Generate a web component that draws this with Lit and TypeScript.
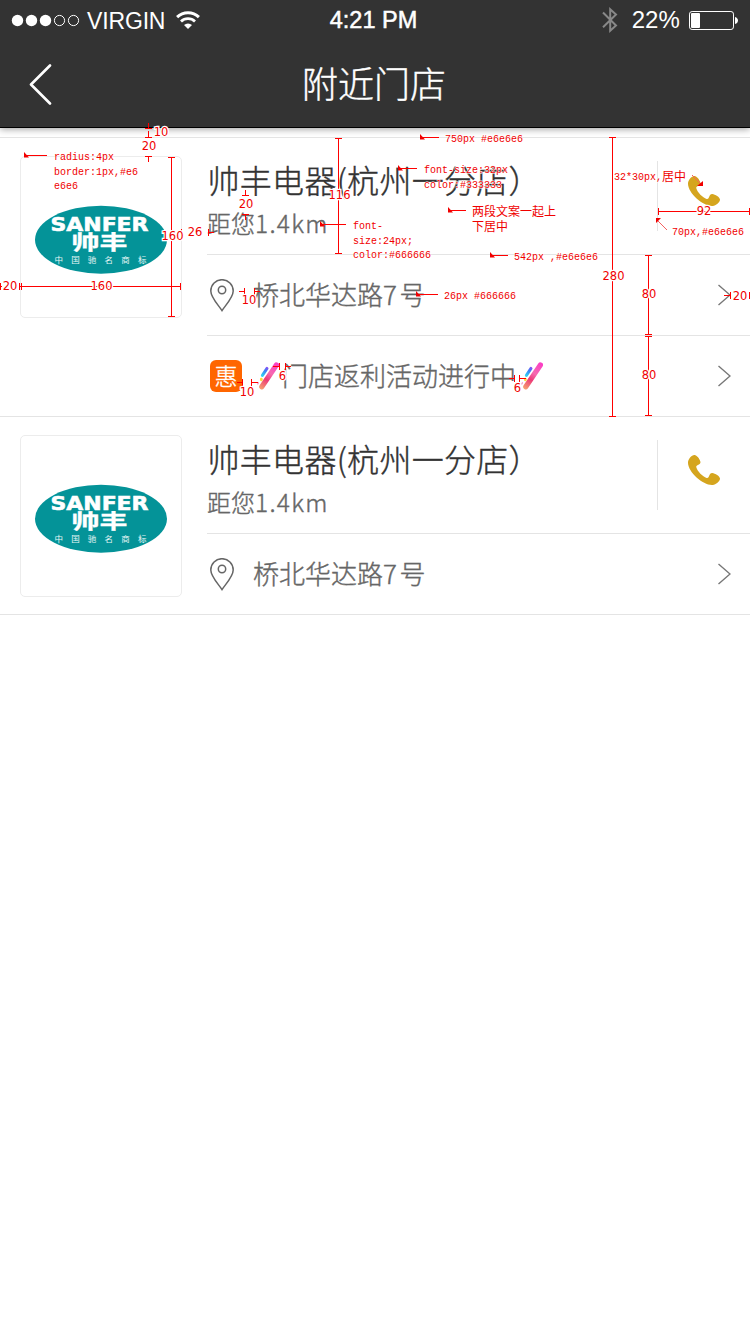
import { LitElement, html, svg, css } from "lit";
import { customElement, property } from "lit/decorators.js";

interface Store {
  name: string;
  distance: [string, string];
  address: [string, string, string];
  promo?: string;
}

const STORES: Store[] = [
  { name: "帅丰电器(杭州一分店）", distance: ["距您", "1.4km"], address: ["桥北华达路", "7", "号"], promo: "门店返利活动进行中" },
  { name: "帅丰电器(杭州一分店）", distance: ["距您", "1.4km"], address: ["桥北华达路", "7", "号"] },
];

@customElement("status-bar")
class StatusBar extends LitElement {
  static styles = css`
    :host { display: grid; grid-template-columns: 1fr auto 1fr; height: 40px; align-items: center; color: #fff; font: 23px/40px "Liberation Sans", Arial, sans-serif; -webkit-text-stroke: 0; }
    svg { display: block; flex: none; }
    .left, .right { display: flex; align-items: center; height: 40px; }
    .left { padding-left: 11px; }
    .right { justify-content: flex-end; padding-right: 12px; }
    .carrier { margin-left: 7px; width: 89px; padding-top: 1px; letter-spacing: -0.15px; }
    .time { font-size: 23.5px; -webkit-text-stroke: 0.5px #fff; padding-right: 3px; }
    .percent { margin: 0 9px 0 14px; font-size: 24px; letter-spacing: 0.1px; }
  `;
  render() {
    return html`
      <div class="left">
        <svg width="69" height="14" viewBox="0 0 69 14">
          ${[6.5, 20.5, 34.5].map((x) => svg`<circle cx=${x} cy="7.5" r="5.7" fill="#fff" />`)}
          ${[48.5, 62.5].map((x) => svg`<circle cx=${x} cy="7.5" r="5.1" fill="none" stroke="#fff" />`)}
        </svg>
        <span class="carrier">VIRGIN</span>
        <svg width="24" height="20" viewBox="0 0 24 20" fill="none" stroke="#fff" stroke-width="3">
          <path d="M1.1 7.1a15.6 15.6 0 0 1 21.8 0" />
          <path d="M5 11.4a10.2 10.2 0 0 1 14 0" stroke-width="2.8" />
          <path d="M8 15a6 6 0 0 1 8 0l-4 4z" fill="#fff" stroke="none" />
        </svg>
      </div>
      <span class="time">4:21 PM</span>
      <div class="right">
        <svg width="16" height="28" viewBox="0 0 16 28" fill="none" stroke="#888" stroke-width="2">
          <path d="M1 6.500l13 13-5.800 5.300V3.200L14 8.500 1 21.300" />
        </svg>
        <span class="percent">22%</span>
        <svg width="49" height="20" viewBox="0 0 49 20">
          <rect x=".5" y="1.5" width="44" height="18" rx="2.6" fill="none" stroke="#fff" />
          <rect x="2" y="3" width="9" height="15" rx="1" fill="#fff" />
          <path d="M46 7c4 1 4 6 0 7z" fill="#fff" />
        </svg>
      </div>
    `;
  }
}

@customElement("store-logo")
class StoreLogo extends LitElement {
  static styles = css`
    :host { display: block; box-sizing: border-box; width: 162px; height: 162px; border: 1px solid #ececec; border-radius: 5px; overflow: hidden; -webkit-text-stroke: 0; }
    svg { display: block; }
    .latin { font: bold 19.5px "DejaVu Sans", sans-serif; fill: #fff; stroke: #fff; stroke-width: 0.6px; }
    .brand { font: 700 20.5px "Noto Sans CJK SC", sans-serif; fill: #fff; stroke: #fff; stroke-width: 0.3px; }
    .tag { font: 8.5px "Noto Sans CJK SC", sans-serif; fill: #e4f6f5; text-anchor: middle; }
  `;
  render() {
    return html`<svg width="160" height="160" viewBox="0 0 160 160">
      <ellipse cx="80" cy="82.700" rx="66" ry="34" fill="#049398" />
      <text class="latin" x="29.500" y="74" textLength="98" lengthAdjust="spacingAndGlyphs">SANFER</text>
      <text class="brand" x="50.500" y="93" textLength="56" lengthAdjust="spacingAndGlyphs">帅丰</text>
      ${[..."中国驰名商标"].map((c, i) => svg`<text class="tag" x=${37.7 + i * 16.7} y="106">${c}</text>`)}
    </svg>`;
  }
}

@customElement("store-card")
class StoreCard extends LitElement {
  @property({ attribute: false }) store!: Store;

  static styles = css`
    :host { display: flex; border-bottom: 1px solid #e4e4e4; padding-left: 20px; gap: 25px; }
    svg { display: block; flex: none; }
    .logo { flex: none; margin-top: 18px; }
    .info { flex: 1; }
    .head { display: flex; align-items: center; height: 116px; }
    .names { flex: 1; height: 116px; white-space: nowrap; padding-top: 18px; box-sizing: border-box; }
    .name { font-size: 32px; line-height: 46px; color: #333; letter-spacing: 0.3px; padding-left: 0.5px; }
    .distance { font-size: 24px; line-height: 42px; color: #666; }
    .latin { font-size: 24.5px; letter-spacing: 1.3px; }
    .call { width: 92px; border-left: 1px solid #e4e4e4; display: flex; justify-content: center; padding-top: 15px; height: 55px; }
    .row { display: flex; align-items: center; height: 80px; border-top: 1px solid #e4e4e4; padding: 0 19px 0 3px; font-size: 26px; line-height: 36px; color: #666; white-space: nowrap; }
    .address { flex: 1; margin-left: 19px; padding-bottom: 2px; }
    .seven { letter-spacing: 2.5px; }
    .badge { width: 32px; height: 32px; border-radius: 6px; background: #ff6600; color: #fff; font-size: 23px; line-height: 31px; text-align: center; margin-right: 15px; }
    .promo { margin: 0 5px 0 3px; padding-bottom: 2px; }
    .push { flex: 1; }
  `;

  private chevron() {
    return html`<svg width="13" height="22" viewBox="0 0 13 22" fill="none" stroke="#777" stroke-width="1.4">
      <path d="M.5 1L12 11 .5 21" />
    </svg>`;
  }

  private brush() {
    return html`<svg width="22" height="28" viewBox="0 0 22 28" stroke-linecap="round">
      <defs>
        <linearGradient id="handle" gradientUnits="userSpaceOnUse" x1="4" y1="26" x2="20" y2="2">
          <stop offset="0" stop-color="#f59a70" />
          <stop offset=".35" stop-color="#ed3a78" />
          <stop offset=".6" stop-color="#f56bb0" />
          <stop offset="1" stop-color="#fb3fc4" />
        </linearGradient>
        <linearGradient id="spark" gradientUnits="userSpaceOnUse" x1="5" y1="14" x2="11" y2="5">
          <stop offset="0" stop-color="#2fd5f2" />
          <stop offset=".6" stop-color="#3d7cf5" />
          <stop offset="1" stop-color="#9747f5" />
        </linearGradient>
      </defs>
      <path d="M19.400 3L4.800 24.800" stroke="url(#handle)" stroke-width="5.200" />
      <path d="M10 6.400L5.400 13.400" stroke="url(#spark)" stroke-width="3" />
      <path d="M4.300 17.200l.1.6" stroke="#ffd93d" stroke-width="2.800" />
      <path d="M1.400 20.800l-.6 1.200" stroke="#f38ac0" stroke-width="1.200" />
    </svg>`;
  }

  render() {
    const s = this.store;
    return html`
      <store-logo class="logo"></store-logo>
      <div class="info">
        <div class="head">
          <div class="names">
            <div class="name">${s.name}</div>
            <div class="distance">${s.distance[0]}<span class="latin">${s.distance[1]}</span></div>
          </div>
          <div class="call">
            <svg width="32" height="30" viewBox="0 0 32 30" fill="#d5a51e">
              <path d="M0 7.400C.1 4.200 3.400.2 6.400 0c2.200-.1 5.300 3.800 6 6.700.3 1.400-.5 2.300-2 3C8.700 10.500 8 11 8.300 12.200c1 4.200 6.500 9.300 10.300 10.700 1.200.4 1.900-.2 2.500-1.800.7-1.900 1.600-3.200 3.100-3.100 3 .2 7.700 3.300 7.800 5.500.1 2.500-4.100 6-7.200 6.400C15.500 30.800-.3 17 0 7.400z" />
            </svg>
          </div>
        </div>
        <div class="row">
          <svg width="24" height="33" viewBox="0 0 24 33" fill="none" stroke="#666" stroke-width="1.500">
            <path d="M12 31.600C9 26.800.8 18.500.8 11.900a11.200 11.200 0 0 1 22.400 0C23.200 18.500 15 26.800 12 31.600z" />
            <circle cx="12" cy="11" r="3.700" />
          </svg>
          <div class="address">${s.address[0]}<span class="seven">${s.address[1]}</span>${s.address[2]}</div>
          ${this.chevron()}
        </div>
        ${s.promo
          ? html`<div class="row">
              <span class="badge">惠</span>${this.brush()}<span class="promo">${s.promo}</span>${this.brush()}
              <span class="push"></span>${this.chevron()}
            </div>`
          : null}
      </div>
    `;
  }
}

type Note = [x: number, baseline: number, text: string, cjk?: boolean];

const NOTES: Note[] = [
  [54, 160, "radius:4px"], [54, 175, "border:1px,#e6"], [54, 189, "e6e6"],
  [445, 142, "750px #e6e6e6"], [424, 173, "font-size:32px"], [424, 188, "color:#333333"],
  [472, 216, "两段文案一起上", true], [472, 231, "下居中", true],
  [353, 229, "font-"], [353, 244, "size:24px;"], [353, 258, "color:#666666"],
  [514, 260, "542px ,#e6e6e6"], [444, 299, "26px #666666"],
  [614, 180, "32*30px,"], [662, 181, "居中", true], [672, 235, "70px,#e6e6e6"],
];

/* Measured values: centre x, baseline, label */
const SIZES: [number, number, string][] = [
  [161, 136, "10"], [149, 150, "20"], [172.5, 240, "160"], [101.5, 290, "160"], [10, 290, "20"],
  [195, 236, "26"], [246, 208, "20"], [339.5, 199, "116"], [249, 304, "10"], [704, 215, "92"],
  [613.5, 280, "280"], [649, 298, "80"], [649, 379, "80"], [740, 300, "20"], [247, 396, "10"],
  [282.5, 380, "6"], [517.5, 392, "6"],
];

const V_LINES: [number, number, number][] = [
  [148, 123, 128], [148, 131, 137], [148, 156, 162], [171, 157, 317], [245, 190, 195], [245, 214, 220],
  [338, 138, 253], [612, 137, 416], [648, 255, 334], [648, 336, 415],
];
const H_LINES: [number, number, number][] = [
  [286, 0, 2], [286, 20, 181], [232, 181, 183], [232, 208, 214], [291, 239, 244], [291, 254, 260], [211, 658, 749],
  [295, 724, 730], [382, 237, 242], [382, 251, 258], [366, 273, 279], [366, 285, 291],
  [378, 509, 514], [378, 519, 526],
];
/* Short end bars across vertical (x, y) and horizontal (x, y) dimension lines */
const V_ENDS: [number, number][] = [
  [148, 128], [148, 137], [148, 156], [171, 157], [171, 316], [245, 195], [245, 214],
  [338, 138], [338, 253], [612, 137], [612, 416], [648, 255], [648, 334], [648, 336], [648, 415],
];
const H_ENDS: [number, number][] = [
  [0, 286], [19, 286], [21, 286], [180, 286], [181, 232], [208, 232], [244, 291], [254, 291], [658, 211], [749, 211],
  [730, 295], [749, 295], [242, 382], [251, 382], [279, 366], [285, 366], [514, 378], [519, 378],
];
const LEADERS: [number, number, number][] = [
  [24, 155, 47], [420, 137, 439], [398, 168, 417], [448, 210, 466], [490, 255, 508], [320, 224, 346], [416, 294, 438],
];

@customElement("spec-overlay")
class SpecOverlay extends LitElement {
  static styles = css`
    :host { display: block; -webkit-text-stroke: 0; font-weight: 400; }
    svg { display: block; }
    .line { stroke: #ff0000; fill: none; shape-rendering: crispEdges; }
    .head { fill: #f00000; }
    .slant { stroke: #f56060; fill: none; }
    .note { font: 10px "Liberation Mono", monospace; }
    .cjk { font: 12px "Noto Sans CJK SC", sans-serif; }
    .size { font: 11.5px "DejaVu Sans", Verdana, sans-serif; fill: #f00000; stroke: #fff; stroke-width: 2.5px; paint-order: stroke; text-anchor: middle; }
    .note, .cjk { fill: #f00000; stroke: #fff; stroke-width: 1px; paint-order: stroke; }
  `;
  render() {
    return html`<svg width="750" height="440" viewBox="0 0 750 440">
      ${V_LINES.map(([x, a, b]) => svg`<path class="line" d="M${x + 0.5} ${a}V${b}" />`)}
      ${H_LINES.map(([y, a, b]) => svg`<path class="line" d="M${a} ${y + 0.5}H${b}" />`)}
      ${V_ENDS.map(([x, y]) => svg`<path class="line" d="M${x - 3} ${y + 0.5}h7" />`)}
      ${H_ENDS.map(([x, y]) => svg`<path class="line" d="M${x + 0.5} ${y - 3}v7" />`)}
      ${LEADERS.map(([x, y, end]) => svg`
        <path class="line" d="M${x} ${y + 0.5}H${end}" />
        <path class="head" d="M${x} ${y - 3}l5 5.500h-5z" />`)}
      <path class="slant" d="M692 175l9 9M667 230l-9-9" />
      <path class="head" d="M703 181v5h-6zM656 223v-5h5z" />
      ${NOTES.map(([x, y, text, cjk]) => svg`<text class=${cjk ? "cjk" : "note"} x=${x} y=${y}>${text}</text>`)}
      ${SIZES.map(([x, y, text]) => svg`<text class="size" x=${x} y=${y}>${text}</text>`)}
    </svg>`;
  }
}

@customElement("app-root")
class AppRoot extends LitElement {
  static styles = css`
    :host { display: block; position: relative; width: 750px; height: 1334px; overflow: hidden; background: #fff; font-family: "Noto Sans CJK SC", sans-serif; font-weight: 300; -webkit-text-stroke: 0.4px currentColor; }
    .top { height: 127px; background: #333; border-bottom: 1px solid #000; box-shadow: 0 1px 7px rgba(0, 0, 0, 0.4); }
    .nav { display: grid; grid-template-columns: 80px 1fr 80px; align-items: center; height: 87px; color: #fff; }
    .back { display: block; margin-left: 29px; }
    .title { font-size: 36px; line-height: 52px; text-align: center; padding: 0 2px 4px 0; }
    .list { margin-top: 9px; border-top: 1px solid #e4e4e4; }
    .spec { position: absolute; left: 0; top: 0; pointer-events: none; }
  `;
  render() {
    return html`
      <header class="top">
        <status-bar></status-bar>
        <nav class="nav">
          <svg class="back" width="24" height="42" viewBox="0 0 24 42" fill="none" stroke="#fff" stroke-width="2.600" stroke-linecap="round" stroke-linejoin="round">
            <path d="M21 2.500L2 21.500 21 40.500" />
          </svg>
          <span class="title">附近门店</span>
        </nav>
      </header>
      <main class="list">${STORES.map((s) => html`<store-card .store=${s}></store-card>`)}</main>
      <spec-overlay class="spec"></spec-overlay>
    `;
  }
}
